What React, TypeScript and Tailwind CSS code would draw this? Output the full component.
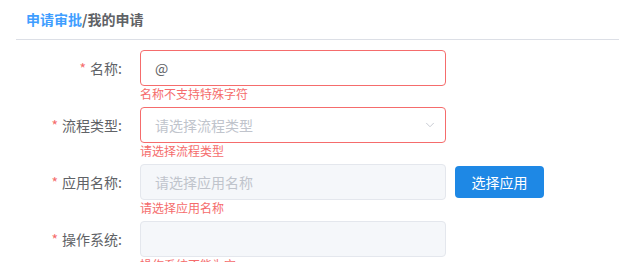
import { ChevronDown } from 'lucide-react'

const FONT = '"Noto Sans CJK SC", "Noto Sans", sans-serif'

type FieldProps = {
  label: string
  error: string
  children: React.ReactNode
  extra?: React.ReactNode
}

function FormRow({ label, error, children, extra }: FieldProps) {
  return (
    <div className="flex items-start mb-[7px]">
      <label className="w-[140px] pr-[18px] h-[36px] leading-[36px] text-right text-[14px] text-[#606266] shrink-0">
        <span className="text-[#f56c6c] mr-[4px]">*</span>
        {label}:
      </label>
      <div className="flex flex-col">
        <div className="flex items-center">
          {children}
          {extra}
        </div>
        <div className="pt-[2px] text-[12px] leading-[12px] text-[#f56c6c]">{error}</div>
      </div>
    </div>
  )
}

export default function App() {
  return (
    <div className="w-[619px] h-[262px] overflow-hidden bg-white" style={{ fontFamily: FONT }}>
      {/* 面包屑 */}
      <div className="pl-[16px]">
        <div className="h-[40px] flex items-center pl-[10px] border-b border-[#dcdfe6] text-[14px] font-bold">
          <span className="text-[#409eff]">申请审批</span>
          <span className="text-[#606266]">/我的申请</span>
        </div>
      </div>

      <div className="pt-[10px]">
        <FormRow label="名称" error="名称不支持特殊字符">
          <div className="w-[306px] h-[36px] border border-[#f56c6c] rounded-[4px] px-[14px] flex items-center text-[14px] text-[#606266]">
            @
          </div>
        </FormRow>

        <FormRow label="流程类型" error="请选择流程类型">
          <div className="w-[306px] h-[36px] border border-[#f56c6c] rounded-[4px] pl-[14px] pr-[8px] flex items-center justify-between text-[14px] text-[#c0c4cc]">
            <span>请选择流程类型</span>
            <ChevronDown size={14} strokeWidth={1.5} className="text-[#c0c4cc]" />
          </div>
        </FormRow>

        <FormRow
          label="应用名称"
          error="请选择应用名称"
          extra={
            <button className="ml-[9px] w-[89px] h-[32px] rounded-[4px] bg-[#1e88e5] text-white text-[14px]">
              选择应用
            </button>
          }
        >
          <div className="w-[306px] h-[36px] border border-[#e4e7ed] bg-[#f5f7fa] rounded-[4px] px-[14px] flex items-center text-[14px] text-[#c0c4cc]">
            请选择应用名称
          </div>
        </FormRow>

        <FormRow label="操作系统" error="操作系统不能为空">
          <div className="w-[306px] h-[36px] border border-[#e4e7ed] bg-[#f5f7fa] rounded-[4px]" />
        </FormRow>
      </div>
    </div>
  )
}
